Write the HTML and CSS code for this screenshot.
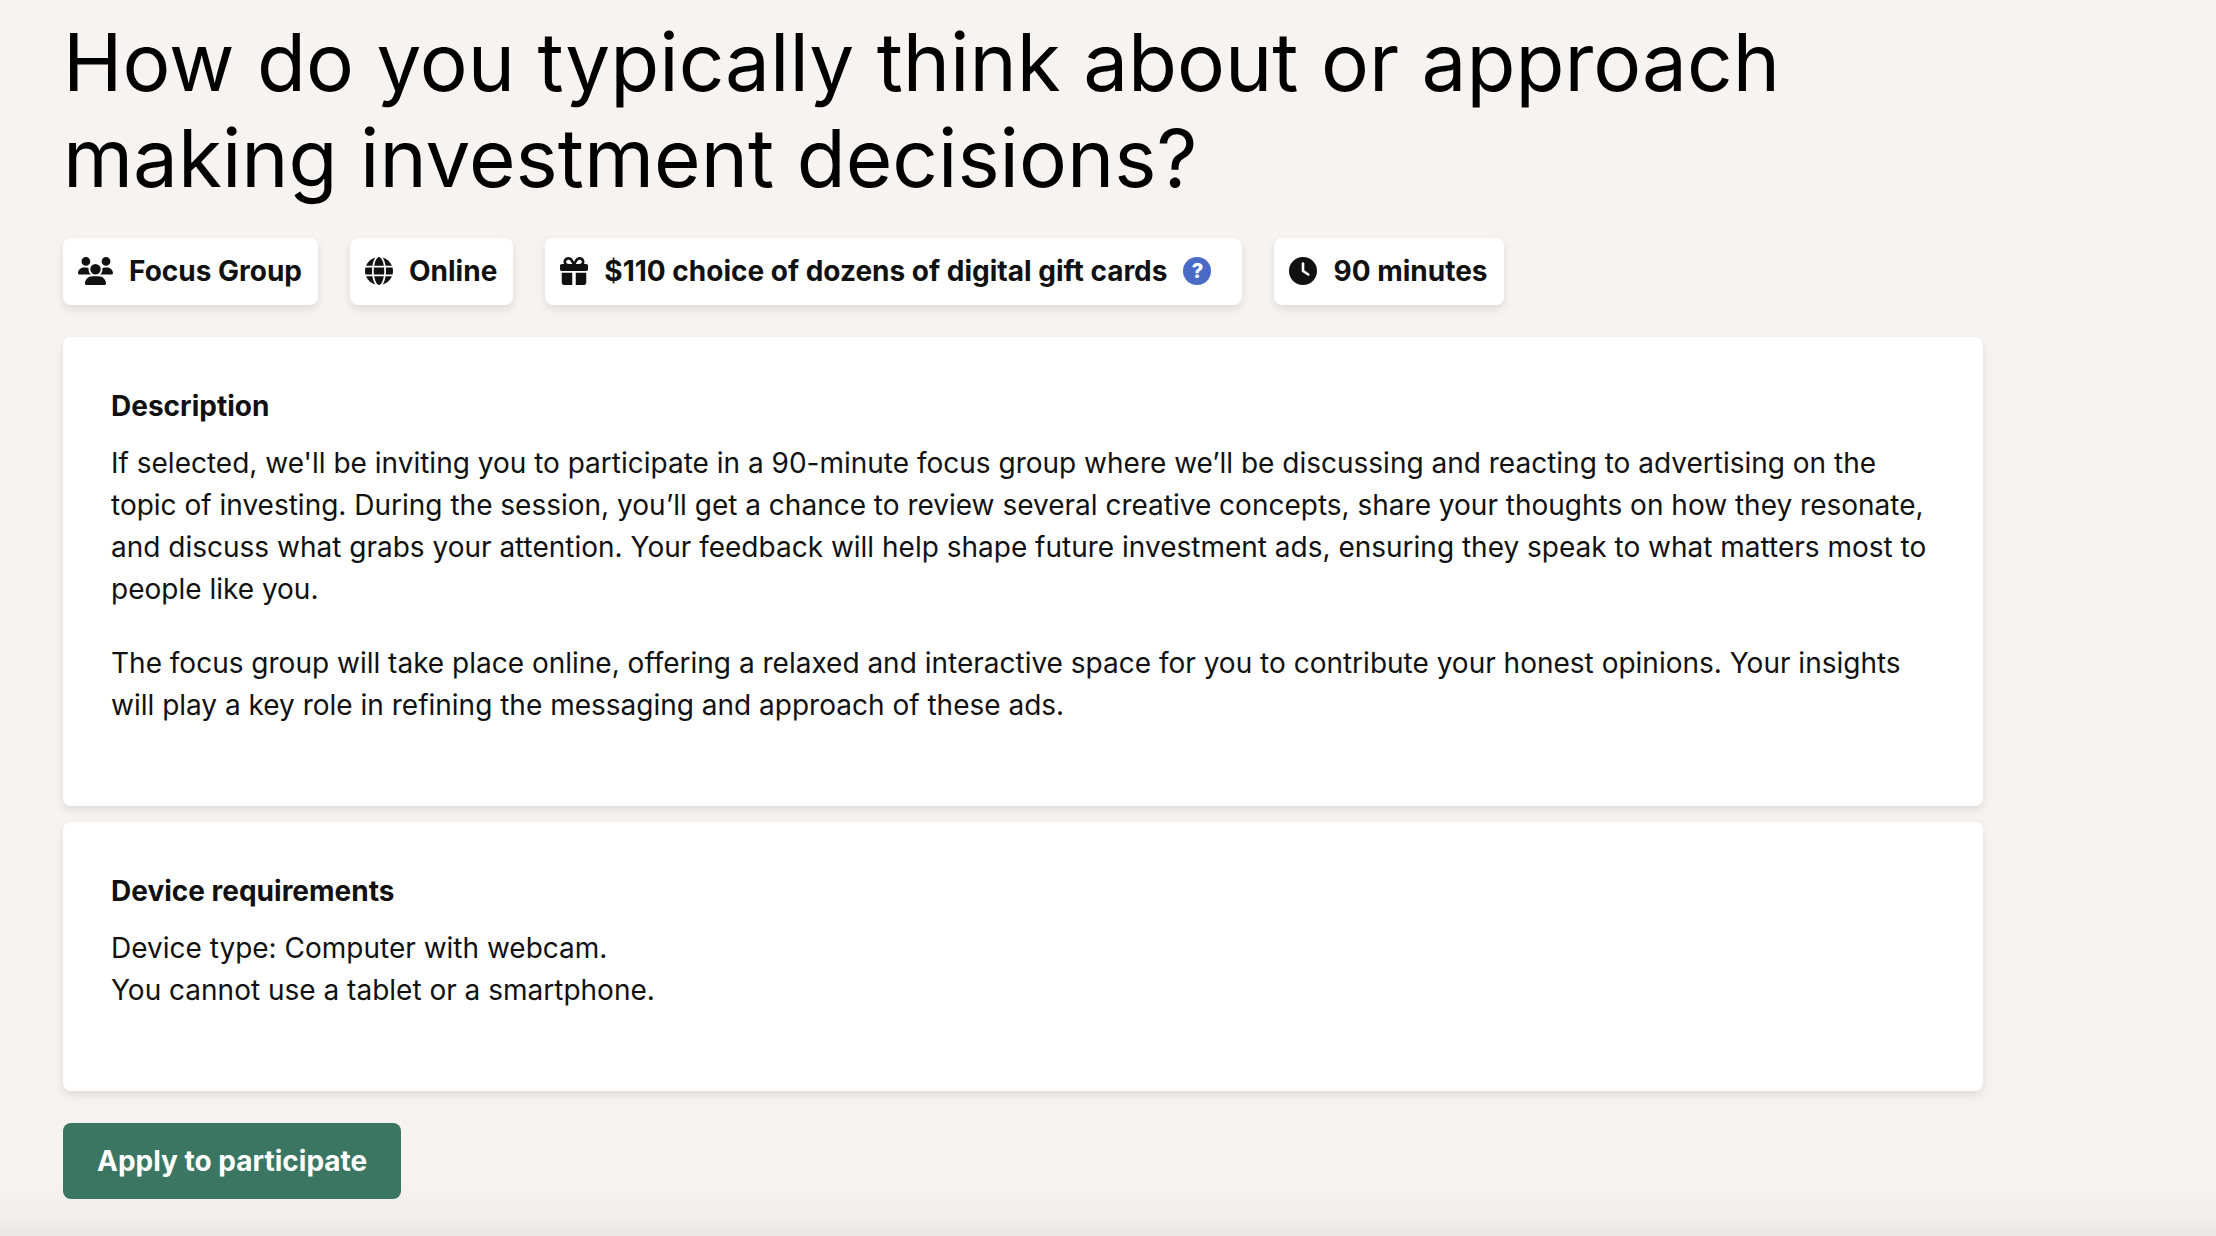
FILE: index.html
```html
<!DOCTYPE html>
<html lang="en">
<head>
  <meta charset="UTF-8">
  <meta name="viewport" content="width=device-width, initial-scale=1">
  <title>How do you typically think about or approach making investment decisions?</title>
  <link rel="stylesheet" href="styles.css">
</head>
<body>
  <main class="page">
    <div class="project">
      <h1 class="title">How do you typically think about or approach making investment decisions?</h1>

      <ul class="tags">
        <li class="tag">
          <svg class="icon icon-wide" viewBox="0 0 640 512" aria-hidden="true"><path d="M144 0a80 80 0 1 1 0 160A80 80 0 1 1 144 0zM512 0a80 80 0 1 1 0 160A80 80 0 1 1 512 0zM0 298.7C0 239.8 47.8 192 106.7 192h42.7c15.9 0 31 3.5 44.6 9.7c-1.3 7.2-1.9 14.7-1.9 22.3c0 38.2 16.8 72.5 43.3 96c-.2 0-.4 0-.7 0H21.3C9.6 320 0 310.4 0 298.7zM405.3 320c-.2 0-.4 0-.7 0c26.6-23.5 43.3-57.8 43.3-96c0-7.6-.7-15-1.9-22.3c13.6-6.3 28.7-9.7 44.6-9.7h42.7C592.2 192 640 239.8 640 298.7c0 11.8-9.6 21.3-21.3 21.3H405.3zM224 224a96 96 0 1 1 192 0 96 96 0 1 1 -192 0zM128 485.3C128 411.7 187.7 352 261.3 352H378.7C452.3 352 512 411.7 512 485.3c0 14.7-11.9 26.7-26.7 26.7H154.7c-14.7 0-26.7-11.9-26.7-26.7z"/></svg>
          <span>Focus Group</span>
        </li>
        <li class="tag">
          <svg class="icon" viewBox="0 0 512 512" aria-hidden="true"><path d="M352 256c0 22.2-1.2 43.6-3.3 64H163.3c-2.2-20.4-3.3-41.8-3.3-64s1.2-43.6 3.3-64H348.7c2.2 20.4 3.3 41.8 3.3 64zm28.8-64H503.9c5.3 20.5 8.1 41.9 8.1 64s-2.8 43.5-8.1 64H380.8c2.1-20.6 3.2-42 3.2-64s-1.1-43.4-3.2-64zm112.6-32H376.7c-10-63.9-29.8-117.4-55.3-151.6c78.3 20.7 142 77.5 171.9 151.6zm-149.1 0H167.7c6.1-36.4 15.5-68.6 27-94.7c10.5-23.6 22.2-40.7 33.5-51.5C239.4 3.2 248.7 0 256 0s16.6 3.2 27.8 13.8c11.3 10.8 23 27.9 33.5 51.5c11.6 26 20.9 58.2 27 94.7zm-209 0H18.6C48.6 85.9 112.2 29.1 190.6 8.4C165.1 42.6 145.3 96.1 135.3 160zM8.1 192H131.2c-2.1 20.6-3.2 42-3.2 64s1.1 43.4 3.2 64H8.1C2.8 299.5 0 278.1 0 256s2.8-43.5 8.1-64zM194.7 446.6c-11.6-26-20.9-58.2-27-94.6H344.3c-6.1 36.4-15.5 68.6-27 94.6c-10.5 23.6-22.2 40.7-33.5 51.5C272.6 508.8 263.3 512 256 512s-16.6-3.2-27.8-13.8c-11.3-10.8-23-27.9-33.5-51.5zM135.3 352c10 63.9 29.8 117.4 55.3 151.6C112.2 482.9 48.6 426.1 18.6 352H135.3zm358.1 0c-30 74.1-93.6 130.9-171.9 151.6c25.5-34.2 45.2-87.7 55.3-151.6H493.4z"/></svg>
          <span>Online</span>
        </li>
        <li class="tag">
          <svg class="icon" viewBox="0 0 512 512" aria-hidden="true"><path d="M190.5 68.8L225.3 128H224 152c-22.1 0-40-17.9-40-40s17.9-40 40-40h2.2c14.9 0 28.8 7.9 36.3 20.8zM64 88c0 14.4 3.5 28 9.6 40H32c-17.7 0-32 14.3-32 32v64c0 17.7 14.3 32 32 32H480c17.7 0 32-14.3 32-32V160c0-17.7-14.3-32-32-32H438.4c6.1-12 9.6-25.6 9.6-40c0-48.6-39.4-88-88-88h-2.2c-31.9 0-61.5 16.9-77.7 44.4L256 85.5l-24.1-41C215.7 16.9 186.1 0 154.2 0H152C103.4 0 64 39.4 64 88zm336 0c0 22.1-17.9 40-40 40H288h-1.3l34.8-59.2C329.1 55.9 342.9 48 357.8 48H360c22.1 0 40 17.9 40 40zM32 288V464c0 26.5 21.5 48 48 48H224V288H32zM288 512H432c26.5 0 48-21.5 48-48V288H288V512z"/></svg>
          <span>$110 choice of dozens of digital gift cards</span>
          <button class="help" type="button">?</button>
        </li>
        <li class="tag">
          <svg class="icon" viewBox="0 0 512 512" aria-hidden="true"><path d="M256 0a256 256 0 1 1 0 512A256 256 0 1 1 256 0zM232 120V256c0 8 4 15.5 10.7 20l96 64c11 7.4 25.9 4.4 33.3-6.7s4.4-25.9-6.7-33.3L280 243.2V120c0-13.3-10.7-24-24-24s-24 10.7-24 24z"/></svg>
          <span>90 minutes</span>
        </li>
      </ul>

      <div class="cards">
        <section class="card">
          <h2>Description</h2>
          <p>If selected, we'll be inviting you to participate in a 90-minute focus group where we’ll be discussing and reacting to advertising on the topic of investing. During the session, you’ll get a chance to review several creative concepts, share your thoughts on how they resonate, and discuss what grabs your attention. Your feedback will help shape future investment ads, ensuring they speak to what matters most to people like you.</p>
          <p>The focus group will take place online, offering a relaxed and interactive space for you to contribute your honest opinions. Your insights will play a key role in refining the messaging and approach of these ads.</p>
        </section>
        <section class="card">
          <h2>Device requirements</h2>
          <p>Device type: Computer with webcam.<br>You cannot use a tablet or a smartphone.</p>
        </section>
      </div>

      <button class="apply" type="button">Apply to participate</button>
    </div>
  </main>
</body>
</html>
```
FILE: styles.css
```css
* {
  box-sizing: border-box;
}
body {
  margin: 0;
  background: #f7f3f0;
  color: #111;
  font-family: Inter, sans-serif;
  font-size: 28px;
  line-height: 42px;
}
.page {
  min-height: 100vh;
  padding: 14px 63px 36px;
  /* soft shade along the bottom edge */
  background: linear-gradient(to top, #eae7e4, #f2eeeb 20px, #f7f3f0 56px);
}
.project {
  max-width: 1920px;
}
.title {
  margin: 0 0 32px;
  color: #000;
  font-size: 80px;
  font-weight: 400;
  line-height: 96px;
}
.tags {
  display: flex;
  flex-wrap: wrap;
  gap: 32px;
  margin: 0 0 32px;
  padding: 0;
  list-style: none;
}
.tag {
  display: flex;
  align-items: center;
  gap: 16px;
  padding: 12px 16px 13px 15px;
  background: #fff;
  border-radius: 8px;
  box-shadow: 0 4px 8px rgba(0,0,0,0.1);
  font-weight: 700;
}
.icon {
  width: 28px;
  height: 28px;
  fill: #111;
}
.icon-wide {
  width: 35px;
}
.help {
  width: 28px;
  height: 28px;
  margin-right: 15px;
  padding: 0;
  border: 0;
  border-radius: 50%;
  background: #4a6bc5;
  color: #fff;
  font: 800 20px/28px Inter, sans-serif;
  cursor: pointer;
}
.cards {
  display: flex;
  flex-direction: column;
  gap: 16px;
  margin-bottom: 32px;
}
.card {
  padding: 48px;
  background: #fff;
  border-radius: 8px;
  box-shadow: 0 4px 8px rgba(0,0,0,0.1);
}
.card h2 {
  margin: 0 0 15px;
  font-size: 28px;
  font-weight: 700;
}
.card p {
  margin: 0 0 32px;
}
.apply {
  display: block;
  padding: 17px 34px;
  border: 0;
  border-radius: 8px;
  background: #3b7663;
  color: #fff;
  font: 700 28px/42px Inter, sans-serif;
  cursor: pointer;
}
```
